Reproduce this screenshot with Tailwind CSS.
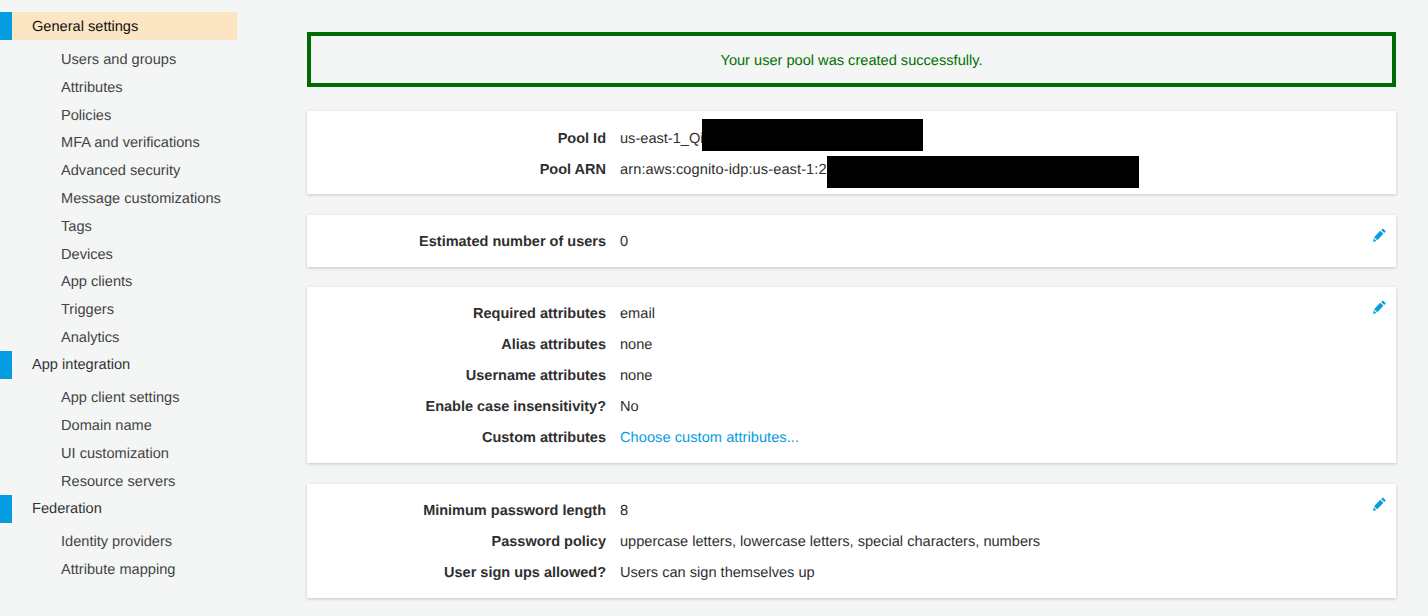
<!DOCTYPE html>
<html lang="en">
<head>
    <meta charset="UTF-8">
    <title>User pool</title>
    <script src="https://cdn.jsdelivr.net/npm/@tailwindcss/browser@4"></script>
</head>
<body class="bg-[#f4f6f6] h-[616px] w-[1428px] overflow-hidden font-['Liberation_Sans',Arial,sans-serif] text-[14.6px] text-[#2f2f2f] [text-rendering:geometricPrecision]">
<div class="flex">
    <!-- sidebar -->
    <nav class="w-[237px] shrink-0 pt-[12px]">
        <div class="flex h-[28px] items-center">
            <span class="w-[12px] h-full bg-[#049ce0]"></span>
            <span class="flex-1 h-full flex items-center pl-[20px] pt-[3px] bg-[#fbe5c3] text-[#111]">General settings</span>
        </div>
        <ul class="mt-[5px] pl-[61px] text-[#444]">
            <li class="h-[27.8px] pt-[4px] flex items-center">Users and groups</li>
            <li class="h-[27.8px] pt-[4px] flex items-center">Attributes</li>
            <li class="h-[27.8px] pt-[4px] flex items-center">Policies</li>
            <li class="h-[27.8px] pt-[4px] flex items-center">MFA and verifications</li>
            <li class="h-[27.8px] pt-[4px] flex items-center">Advanced security</li>
            <li class="h-[27.8px] pt-[4px] flex items-center">Message customizations</li>
            <li class="h-[27.8px] pt-[4px] flex items-center">Tags</li>
            <li class="h-[27.8px] pt-[4px] flex items-center">Devices</li>
            <li class="h-[27.8px] pt-[4px] flex items-center">App clients</li>
            <li class="h-[27.8px] pt-[4px] flex items-center">Triggers</li>
            <li class="h-[27.8px] pt-[4px] flex items-center">Analytics</li>
        </ul>
        <div class="flex h-[28px] items-center">
            <span class="w-[12px] h-full bg-[#049ce0]"></span>
            <span class="pl-[20px] pt-[3px] text-[#333]">App integration</span>
        </div>
        <ul class="mt-[5px] pl-[61px] text-[#444]">
            <li class="h-[27.8px] pt-[3px] flex items-center">App client settings</li>
            <li class="h-[27.8px] pt-[3px] flex items-center">Domain name</li>
            <li class="h-[27.8px] pt-[3px] flex items-center">UI customization</li>
            <li class="h-[27.8px] pt-[3px] flex items-center">Resource servers</li>
        </ul>
        <div class="flex h-[28px] items-center">
            <span class="w-[12px] h-full bg-[#049ce0]"></span>
            <span class="pl-[20px] pt-[2px] text-[#333]">Federation</span>
        </div>
        <ul class="mt-[5px] pl-[61px] text-[#444]">
            <li class="h-[27.8px] pt-[3px] flex items-center">Identity providers</li>
            <li class="h-[27.8px] pt-[3px] flex items-center">Attribute mapping</li>
        </ul>
    </nav>

    <!-- main -->
    <main class="ml-[70px] w-[1089px] pt-[32px]">
        <div class="h-[55px] pt-[5px] border-[4px] border-[#006b00] bg-[#f4f6f6] flex items-center justify-center text-[#007000] mb-[24px]">
            Your user pool was created successfully.
        </div>

        <section class="relative h-[83px] bg-white shadow-[0_1px_3px_rgba(0,0,0,0.2)] pt-[13px] mb-[21px]">
            <div class="flex h-[31px] items-center">
                <span class="w-[299px] text-right font-bold text-[14.5px]">Pool Id</span>
                <span class="ml-[14px]">us-east-1_Qi</span>
            </div>
            <div class="flex h-[31px] items-center">
                <span class="w-[299px] text-right font-bold text-[14.5px]">Pool ARN</span>
                <span class="ml-[14px] tracking-[0.1px]">arn:aws:cognito-idp:us-east-1:2</span>
            </div>
            <div class="absolute left-[395px] top-[8px] w-[221px] h-[32px] bg-black"></div>
            <div class="absolute left-[520px] top-[45px] w-[312px] h-[32px] bg-black"></div>
        </section>

        <section class="relative h-[52px] bg-white shadow-[0_1px_3px_rgba(0,0,0,0.2)] pt-[12px] mb-[20px]">
            <div class="flex h-[31px] items-center">
                <span class="w-[299px] text-right font-bold text-[14.5px]">Estimated number of users</span>
                <span class="ml-[14px]">0</span>
            </div>
            <svg class="absolute left-[1066px] top-[13px] w-[13px] h-[14px]" viewBox="0 0 13 14" fill="#049ce0"><path d="M9.8 0.4 L12.8 3.2 L11.2 4.9 L8.2 2.1 Z M7.2 2.8 L10.4 5.8 L4.3 12.3 L1.1 9.3 Z M0.8 10.2 L3.4 12.9 L0.1 13.9 Z"/></svg>
        </section>

        <section class="relative h-[176px] bg-white shadow-[0_1px_3px_rgba(0,0,0,0.2)] pt-[12px] mb-[21px]">
            <div class="flex h-[31px] items-center">
                <span class="w-[299px] text-right font-bold text-[14.5px]">Required attributes</span>
                <span class="ml-[14px]">email</span>
            </div>
            <div class="flex h-[31px] items-center">
                <span class="w-[299px] text-right font-bold text-[14.5px]">Alias attributes</span>
                <span class="ml-[14px]">none</span>
            </div>
            <div class="flex h-[31px] items-center">
                <span class="w-[299px] text-right font-bold text-[14.5px]">Username attributes</span>
                <span class="ml-[14px]">none</span>
            </div>
            <div class="flex h-[31px] items-center">
                <span class="w-[299px] text-right font-bold text-[14.5px]">Enable case insensitivity?</span>
                <span class="ml-[14px]">No</span>
            </div>
            <div class="flex h-[31px] items-center">
                <span class="w-[299px] text-right font-bold text-[14.5px]">Custom attributes</span>
                <a href="#" class="ml-[14px] text-[#049ce0] tracking-[0.05px]">Choose custom attributes...</a>
            </div>
            <svg class="absolute left-[1066px] top-[13px] w-[13px] h-[14px]" viewBox="0 0 13 14" fill="#049ce0"><path d="M9.8 0.4 L12.8 3.2 L11.2 4.9 L8.2 2.1 Z M7.2 2.8 L10.4 5.8 L4.3 12.3 L1.1 9.3 Z M0.8 10.2 L3.4 12.9 L0.1 13.9 Z"/></svg>
        </section>

        <section class="relative h-[114px] bg-white shadow-[0_1px_3px_rgba(0,0,0,0.2)] pt-[12px]">
            <div class="flex h-[31px] items-center">
                <span class="w-[299px] text-right font-bold text-[14.5px]">Minimum password length</span>
                <span class="ml-[14px]">8</span>
            </div>
            <div class="flex h-[31px] items-center">
                <span class="w-[299px] text-right font-bold text-[14.5px]">Password policy</span>
                <span class="ml-[14px]">uppercase letters, lowercase letters, special characters, numbers</span>
            </div>
            <div class="flex h-[31px] items-center">
                <span class="w-[299px] text-right font-bold text-[14.5px]">User sign ups allowed?</span>
                <span class="ml-[14px]">Users can sign themselves up</span>
            </div>
            <svg class="absolute left-[1066px] top-[13px] w-[13px] h-[14px]" viewBox="0 0 13 14" fill="#049ce0"><path d="M9.8 0.4 L12.8 3.2 L11.2 4.9 L8.2 2.1 Z M7.2 2.8 L10.4 5.8 L4.3 12.3 L1.1 9.3 Z M0.8 10.2 L3.4 12.9 L0.1 13.9 Z"/></svg>
        </section>
    </main>
</div>
</body>
</html>
